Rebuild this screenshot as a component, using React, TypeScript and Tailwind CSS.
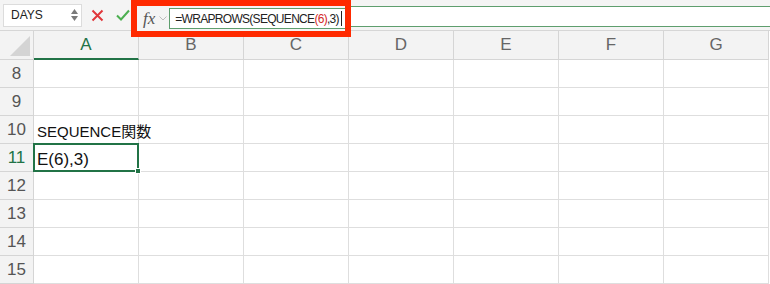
import React from "react";

const cols = ["A", "B", "C", "D", "E", "F", "G"];
const rows = [8, 9, 10, 11, 12, 13, 14, 15, 16];

export default function App() {
  return (
    <div className="w-[770px] h-[284px] overflow-hidden bg-white font-['Liberation_Sans','Noto_Sans_CJK_JP',sans-serif]">
      {/* formula bar */}
      <div className="relative flex items-center h-[31px] bg-[#f4f4f4] border-b border-[#d6d6d6]">
        <div className="ml-[3px] flex items-center justify-between w-[79px] h-[23px] bg-white border border-[#dcdcdc] pl-[7px] pr-[3px]">
          <span className="text-[12px] text-[#222]">DAYS</span>
          <span className="flex flex-col items-center gap-[2px] text-[#7a7a7a]">
            <svg width="7" height="5" viewBox="0 0 7 5"><path d="M0 5 L3.5 0 L7 5Z" fill="currentColor" /></svg>
            <svg width="7" height="5" viewBox="0 0 7 5"><path d="M0 0 L3.5 5 L7 0Z" fill="currentColor" /></svg>
          </span>
        </div>
        <svg className="ml-[9px]" width="13" height="13" viewBox="0 0 13 13">
          <path d="M1.5 1.5 L11.5 11.5 M11.5 1.5 L1.5 11.5" stroke="#e0373b" strokeWidth="2" />
        </svg>
        <svg className="ml-[12px] mr-[1px]" width="14" height="12" viewBox="0 0 14 12">
          <path d="M1 6.5 L5 10.5 L13 1.5" stroke="#4caf50" strokeWidth="2" fill="none" />
        </svg>
        <div className="relative z-10 flex items-center self-start h-[37px] w-[220px] border-[6px] border-[#ff2a00] pl-[6px] bg-[#f4f4f4]">
          <span className="font-['Liberation_Serif',serif] italic text-[17px] text-[#555] leading-none">fx</span>
          <svg className="ml-[4px] mr-[2px] shrink-0" width="8" height="5" viewBox="0 0 8 5">
            <path d="M0.5 0.5 L4 4 L7.5 0.5" stroke="#bbb" strokeWidth="1" fill="none" />
          </svg>
          <div className="flex items-center flex-1 min-w-0 overflow-hidden h-[21px] bg-white border border-[#5e9e6e] border-r-0 pl-[5px] text-[12px] tracking-[-0.7px] text-[#222] whitespace-nowrap">
            =WRAPROWS(SEQUENCE<span className="text-[#d42a2a]">(6)</span>,3)
            <span className="ml-[2px] w-px h-[15px] bg-[#222] shrink-0" />
          </div>
        </div>
        <div className="absolute left-[345px] right-0 top-[6px] h-[21px] bg-white border-y border-[#5e9e6e]" />
      </div>

      {/* grid */}
      <div className="grid grid-cols-[34px_repeat(7,105px)]">
        <div className="relative h-[29px] bg-[#f3f3f3] border-r border-b border-[#d5d5d5]">
          <svg className="absolute right-[3px] bottom-[3px]" width="20" height="20" viewBox="0 0 20 20">
            <path d="M20 0 L20 20 L0 20Z" fill="#d4d4d4" />
          </svg>
        </div>
        {cols.map((c) => (
          <div
            key={c}
            className={
              c === "A"
                ? "flex items-center justify-center h-[29px] bg-[#f3f3f3] border-r border-[#d5d5d5] border-b-2 border-b-[#217346] text-[17px] text-[#217346]"
                : "flex items-center justify-center h-[29px] bg-[#f3f3f3] border-r border-b border-[#d5d5d5] text-[17px] text-[#666]"
            }
          >
            {c}
          </div>
        ))}
        {rows.map((r) => (
          <React.Fragment key={r}>
            <div
              className={
                r === 11
                  ? "flex items-center justify-center h-[28px] bg-[#f3f3f3] border-r border-b border-[#d5d5d5] text-[17px] text-[#217346]"
                  : "flex items-center justify-center h-[28px] bg-[#f3f3f3] border-r border-b border-[#d5d5d5] text-[17px] text-[#555]"
              }
            >
              {r < 16 ? r : ""}
            </div>
            {cols.map((c) => (
              <div key={c} className="relative h-[28px] border-r border-b border-[#dedede]">
                {r === 10 && c === "A" && (
                  <span className="absolute left-[3px] top-[5px] whitespace-nowrap text-[15px] text-[#111]">
                    SEQUENCE関数
                  </span>
                )}
                {r === 11 && c === "A" && (
                  <div className="absolute -left-[1px] -top-[1px] w-[106px] h-[29px] border-2 border-[#217346] z-10">
                    <span className="absolute left-[2px] top-[2px] text-[17px] text-[#111]">E(6),3)</span>
                    <span className="absolute -right-[4px] -bottom-[4px] w-[6px] h-[6px] bg-[#217346] border border-white" />
                  </div>
                )}
              </div>
            ))}
          </React.Fragment>
        ))}
      </div>
    </div>
  );
}
